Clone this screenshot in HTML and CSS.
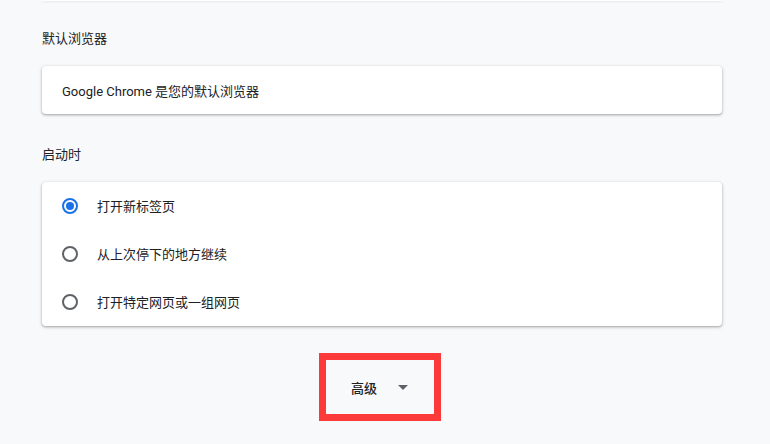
FILE: index.html
```html
<!DOCTYPE html>
<html lang="zh-CN">
<head>
    <meta charset="UTF-8">
    <meta name="viewport" content="width=device-width, initial-scale=1.0">
    <title>设置</title>
    <link rel="stylesheet" href="styles.css">
</head>
<body>
    <div class="page">
        <div class="card stub"></div>

        <h2 class="section-title first">默认浏览器</h2>
        <div class="card">
            <div class="row">Google Chrome 是您的默认浏览器</div>
        </div>

        <h2 class="section-title">启动时</h2>
        <div class="card">
            <label class="row radio-row">
                <span class="radio checked"></span>
                <span>打开新标签页</span>
            </label>
            <label class="row radio-row">
                <span class="radio"></span>
                <span>从上次停下的地方继续</span>
            </label>
            <label class="row radio-row">
                <span class="radio"></span>
                <span>打开特定网页或一组网页</span>
            </label>
        </div>

        <div class="advanced-wrap">
            <button class="advanced">
                <span>高级</span>
                <span class="arrow"></span>
            </button>
        </div>
    </div>
</body>
</html>
```

FILE: styles.css
```css
* {
    box-sizing: border-box;
}

body {
    margin: 0;
    background: #f8f9fa;
    font-family: Roboto, "Noto Sans CJK SC", sans-serif;
    font-size: 13px;
    color: #202124;
}

.page {
    width: 680px;
    margin-left: 42px;
}

.card {
    background: #fff;
    border-radius: 4px;
    box-shadow: 0 1px 2px 0 rgba(60, 64, 67, 0.3), 0 1px 3px 1px rgba(60, 64, 67, 0.15);
}

.stub {
    height: 1px;
    border-radius: 0 0 4px 4px;
    box-shadow: 0 1px 2px 0 rgba(60, 64, 67, 0.12);
}

.section-title {
    margin: 31px 0 17px;
    font-size: 13px;
    font-weight: 400;
    line-height: 20px;
    height: 20px;
}

.section-title.first {
    margin-top: 28px;
}

.row {
    display: flex;
    align-items: center;
    height: 48px;
    padding: 0 20px;
}

.radio-row {
    gap: 19px;
    cursor: pointer;
    padding-bottom: 1px;
}

.radio {
    width: 16px;
    height: 16px;
    border: 2px solid #5f6368;
    border-radius: 50%;
    flex-shrink: 0;
    position: relative;
}

.radio.checked {
    border-color: #1a73e8;
}

.radio.checked::after {
    content: "";
    position: absolute;
    left: 2px;
    top: 2px;
    width: 8px;
    height: 8px;
    border-radius: 50%;
    background: #1a73e8;
}

.advanced-wrap {
    display: flex;
    justify-content: center;
    margin-top: 27px;
    padding-right: 4px;
}

.advanced {
    display: inline-flex;
    align-items: center;
    gap: 21px;
    height: 68px;
    padding: 0 26px 0 25px;
    border: 7px solid #fc3a3a;
    background: transparent;
    font-family: inherit;
    font-size: 13px;
    font-weight: 500;
    color: #202124;
}

.arrow {
    width: 0;
    height: 0;
    border-left: 5px solid transparent;
    border-right: 5px solid transparent;
    border-top: 5px solid #5f6368;
    margin-top: 1px;
}
```
